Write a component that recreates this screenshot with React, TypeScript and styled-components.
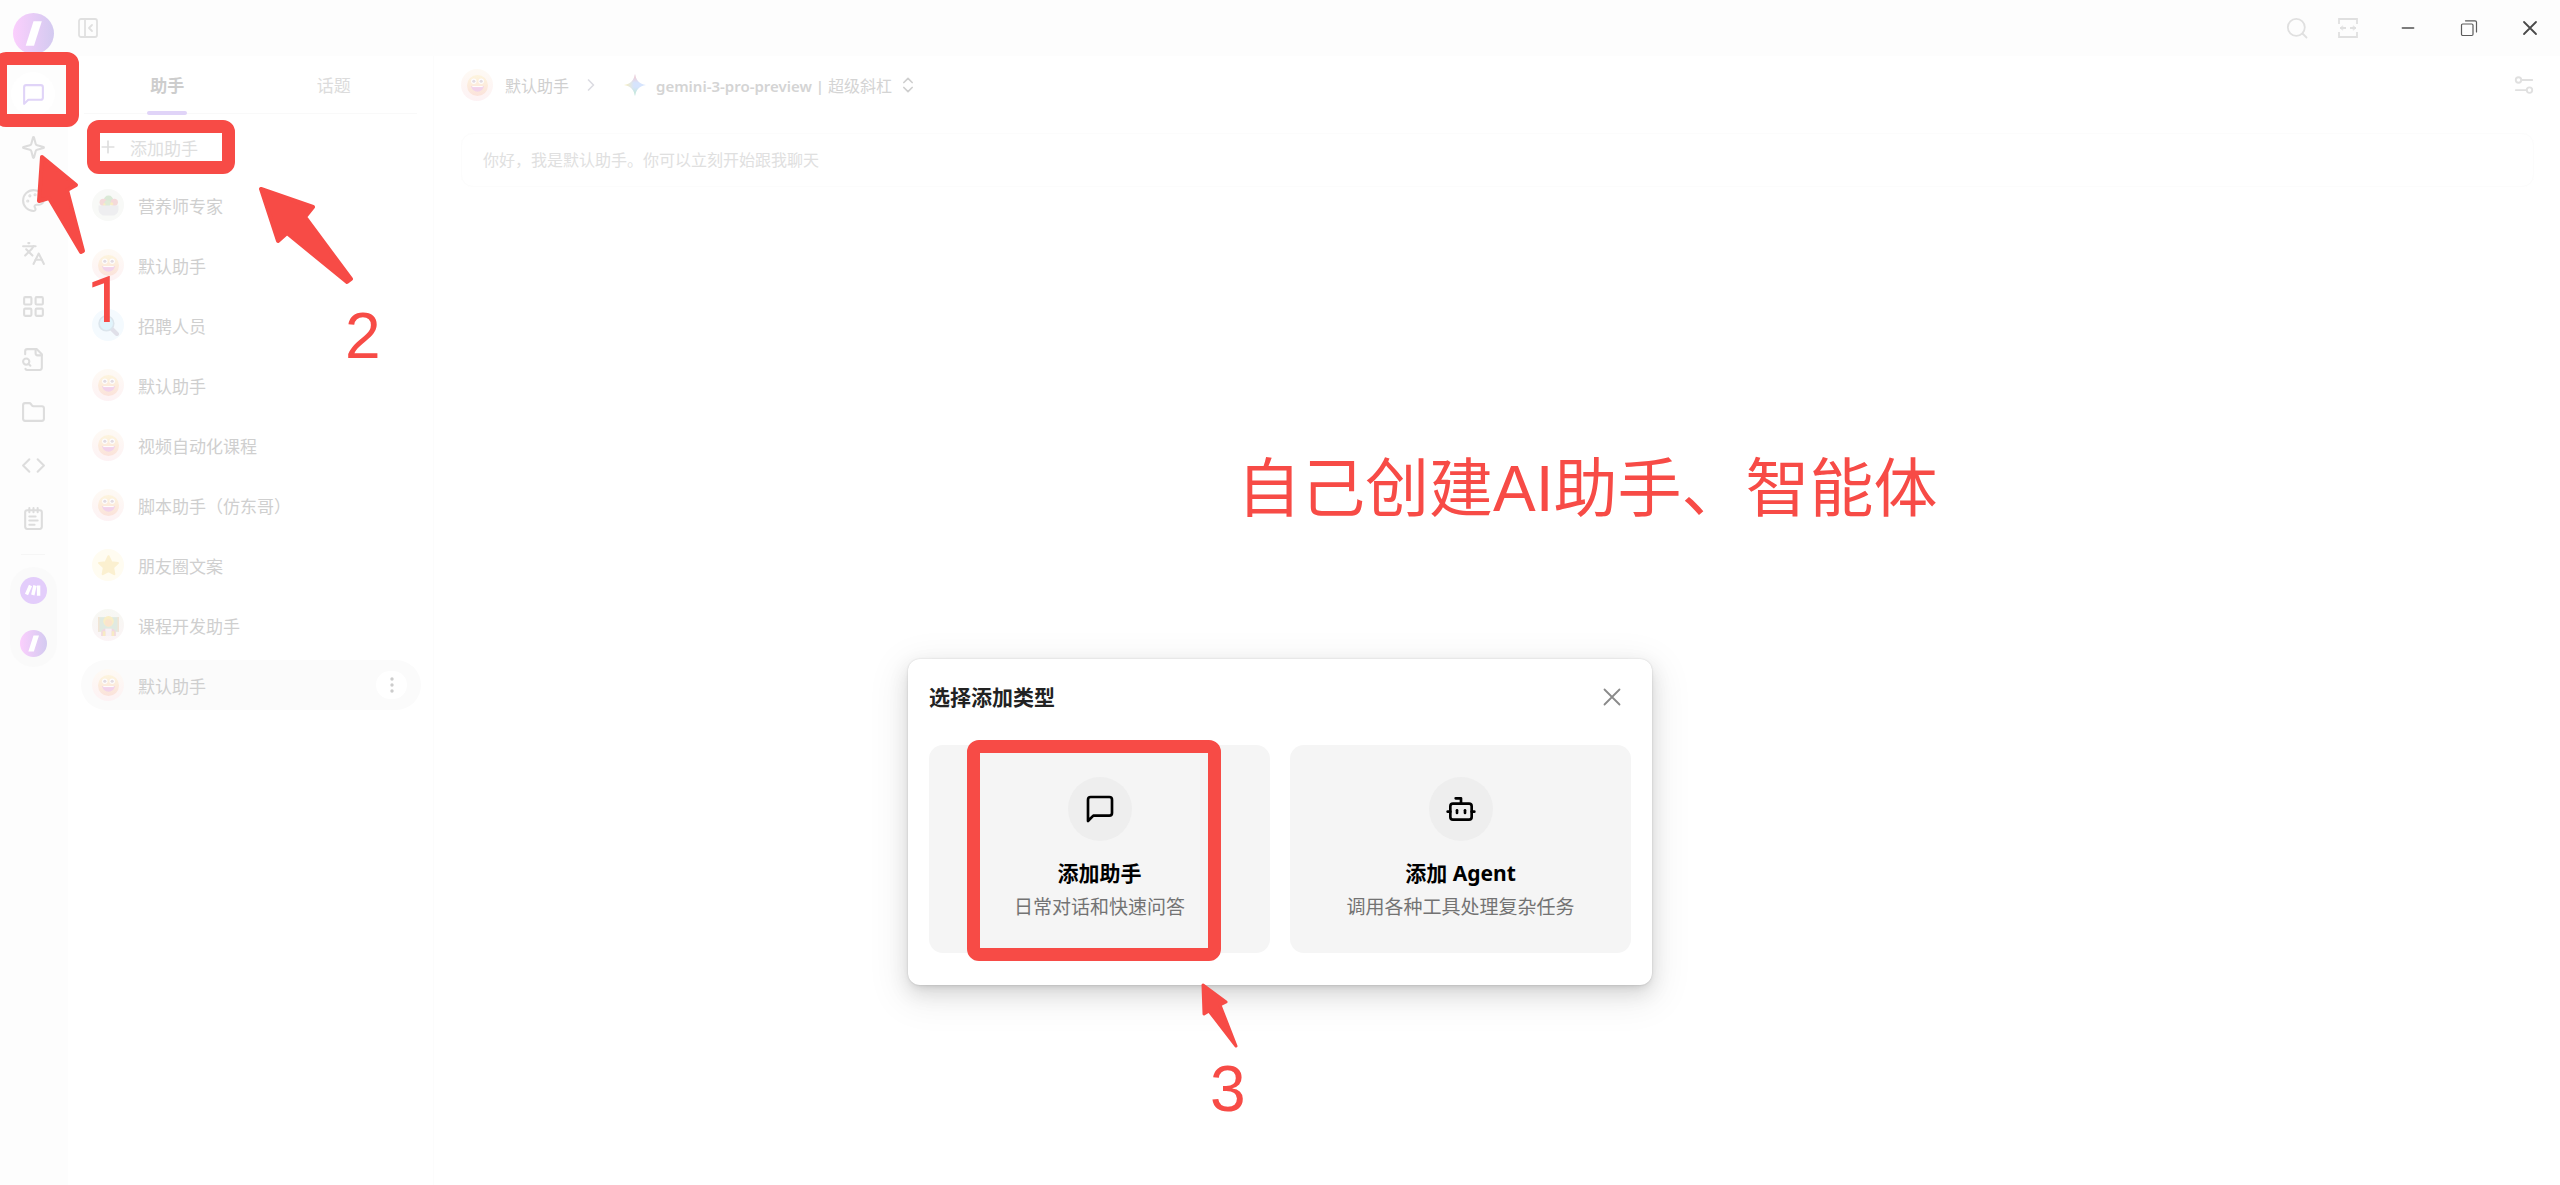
import React from 'react';
import styled, { createGlobalStyle, css } from 'styled-components';
import { Bot, Code, Folder, Languages, LayoutGrid, NotepadText, Palette, Plus } from 'lucide-react';

const RED = '#f74b46';

const GlobalStyle = createGlobalStyle`
  *, *::before, *::after { box-sizing: border-box; }
  body {
    margin: 0;
    background: #fdfdfd;
    font-family: "Noto Sans", "Noto Sans CJK SC", sans-serif;
    color: #cccccc;
  }
  button { font: inherit; color: inherit; border: 0; padding: 0; background: none; cursor: pointer; }
  h2, h3, p, ul { margin: 0; padding: 0; }
  ul { list-style: none; }
  svg { display: block; flex: none; }
`;

/* ---------- layout ---------- */

const Shell = styled.div`
  position: relative;
  display: grid;
  grid-template-columns: 68px minmax(0, 1fr);
  min-height: 100vh;
  overflow: hidden;
`;

const Rail = styled.aside`
  display: flex;
  flex-direction: column;
  align-items: center;
  padding: 13px 2px 0 0;
`;

const Avatar = styled.button`
  margin-bottom: 18px;
`;

const RailNav = styled.nav`
  display: flex;
  flex-direction: column;
  gap: 9px;
`;

const RailButton = styled.button<{ $active?: boolean }>`
  display: grid;
  place-items: center;
  width: 44px;
  height: 44px;
  border-radius: 50%;
  color: ${p => (p.$active ? '#e0d4f8' : '#dddddd')};
  background: ${p => (p.$active ? '#ffffff' : 'transparent')};
`;

const RailDivider = styled.hr`
  width: 24px;
  margin: 14px 0 12px;
  border: 0;
  border-top: 1px solid #f6f6f6;
`;

const PinnedApps = styled.div`
  display: flex;
  flex-direction: column;
  gap: 26px;
  padding: 10px;
  border-radius: 24px;
  background: #fafafa;
`;

const Body = styled.div`
  display: flex;
  flex-direction: column;
  min-width: 0;
`;

const TitleBar = styled.header`
  display: flex;
  align-items: center;
  justify-content: space-between;
  height: 56px;
  padding-left: 6px;
  color: #e0e0e0;
`;

const WindowTools = styled.div`
  display: flex;
  align-items: center;
`;

const ToolButton = styled.button<{ $width: number; $tone?: string }>`
  display: grid;
  place-items: center;
  width: ${p => p.$width}px;
  height: 40px;
  color: ${p => p.$tone ?? '#e0e0e0'};
`;

const Workspace = styled.main`
  flex: 1;
  display: grid;
  grid-template-columns: 366px minmax(0, 1fr);
  background: #ffffff;
`;

/* ---------- assistant list ---------- */

const ListPanel = styled.section`
  border-right: 1px solid #fcfcfc;
`;

const Tabs = styled.div`
  display: grid;
  grid-template-columns: 1fr 1fr;
  height: 58px;
  margin: 0 16px;
  border-bottom: 1px solid #f9f9f9;
`;

const Tab = styled.button<{ $active?: boolean }>`
  position: relative;
  font-size: 17px;
  font-weight: ${p => (p.$active ? 700 : 400)};
  color: ${p => (p.$active ? '#cdcdcd' : '#dcdcdc')};
  ${p =>
    p.$active &&
    css`
      &::after {
        content: '';
        position: absolute;
        left: 50%;
        bottom: -2px;
        width: 40px;
        height: 4px;
        margin-left: -20px;
        border-radius: 2px;
        background: #e0d4f8;
      }
    `}
`;

const AddButton = styled.button`
  display: flex;
  align-items: center;
  gap: 12px;
  height: 42px;
  margin: 12px 0 12px 30px;
  font-size: 17px;
  color: #dedede;
`;

const AssistantList = styled.ul`
  display: flex;
  flex-direction: column;
  gap: 10px;
  padding: 0 12px 0 13px;
`;

const AssistantRow = styled.li<{ $selected?: boolean }>`
  display: flex;
  align-items: center;
  height: 50px;
  padding: 0 14px 0 11px;
  border-radius: 25px;
  background: ${p => (p.$selected ? '#fbfbfb' : 'transparent')};
`;

const AssistantButton = styled.button`
  flex: 1;
  display: flex;
  align-items: center;
  gap: 14px;
  font-size: 17px;
  text-align: left;
  color: #cfcfcf;
`;

const MoreButton = styled.button`
  display: grid;
  place-items: center;
  width: 31px;
  height: 28px;
  border-radius: 14px;
  color: #cccccc;
  background: #ffffff;
`;

const EmojiDisc = styled.span<{ $tint: string }>`
  display: grid;
  place-items: center;
  width: 32px;
  height: 32px;
  border-radius: 50%;
  background: ${p => p.$tint};

  svg {
    opacity: 0.8;
  }
`;

/* ---------- chat ---------- */

const ChatPanel = styled.section`
  display: flex;
  flex-direction: column;
`;

const ChatHeader = styled.div`
  display: flex;
  align-items: center;
  justify-content: space-between;
  height: 58px;
  padding: 0 25px 0 27px;
`;

const Crumbs = styled.div`
  display: flex;
  align-items: center;
  font-size: 16px;
  color: #cfcfcf;
`;

const CrumbButton = styled.button<{ $gap: number }>`
  display: flex;
  align-items: center;
  gap: ${p => p.$gap}px;
`;

const CrumbArrow = styled.span`
  padding: 0 23px 0 12px;
  color: #dcdce2;
`;

const ModelName = styled.span`
  display: flex;
  align-items: baseline;
  gap: 4px;
  padding-left: 4px;
  color: #d4d4d4;
  white-space: nowrap;
`;

const ModelId = styled.strong`
  font-size: 15px;
  font-weight: 600;
`;

const Greeting = styled.p`
  margin: 19px 26px 0 27px;
  padding: 14px 21px;
  border: 1px solid #fcfcfc;
  border-radius: 12px;
  font-size: 16px;
  line-height: 24px;
  color: #e0e0e0;
`;

/* ---------- dialog ---------- */

const Overlay = styled.div`
  position: absolute;
  inset: 0;
  display: flex;
  align-items: flex-start;
  justify-content: center;
  padding-top: 659px;
`;

const Dialog = styled.section`
  width: 744px;
  padding: 16px 21px 32px;
  border-radius: 12px;
  background: #ffffff;
  box-shadow: 0 8px 20px rgba(0, 0, 0, 0.12), 0 4px 8px -4px rgba(0, 0, 0, 0.14), 0 10px 36px 10px rgba(0, 0, 0, 0.06),
    0 0 2px rgba(0, 0, 0, 0.16);
`;

const DialogHead = styled.header`
  display: flex;
  align-items: center;
  justify-content: space-between;
  height: 44px;
  margin-bottom: 26px;
`;

const DialogTitle = styled.h2`
  font-size: 21px;
  line-height: 32px;
  font-weight: 700;
  color: #222222;
`;

const CloseButton = styled.button`
  display: grid;
  place-items: center;
  width: 38px;
  height: 38px;
  color: #8a8a8a;
`;

const Choices = styled.div`
  display: grid;
  grid-template-columns: 1fr 1fr;
  gap: 20px;
`;

const Choice = styled.button`
  display: flex;
  flex-direction: column;
  align-items: center;
  padding: 32px 16px;
  border-radius: 14px;
  background: #f5f5f5;
`;

const ChoiceIcon = styled.span`
  display: grid;
  place-items: center;
  width: 64px;
  height: 64px;
  margin-bottom: 16px;
  border-radius: 50%;
  color: #000000;
  background: #eeeeee;
`;

const ChoiceTitle = styled.span`
  margin-bottom: 4px;
  font-size: 21px;
  line-height: 32px;
  font-weight: 700;
  color: #000000;
`;

const ChoiceText = styled.span`
  font-size: 19px;
  line-height: 28px;
  color: #737373;
`;

/* ---------- annotations drawn over the window ---------- */

const Markup = styled.div`
  position: absolute;
  inset: 0;
  pointer-events: none;
  font-family: "Liberation Sans", "Noto Sans CJK SC", sans-serif;
  font-size: 64px;
  line-height: 72px;
  color: ${RED};
`;

const Frame = styled.div<{ $x: number; $y: number; $w: number; $h: number }>`
  position: absolute;
  left: ${p => p.$x}px;
  top: ${p => p.$y}px;
  width: ${p => p.$w}px;
  height: ${p => p.$h}px;
  border: 13px solid ${RED};
  border-radius: 12px;
`;

const Note = styled.span<{ $x: number; $y: number; $face?: string }>`
  position: absolute;
  left: ${p => p.$x}px;
  top: ${p => p.$y}px;
  font-family: ${p => p.$face ?? 'inherit'};
  white-space: nowrap;
`;

const Arrows = styled.svg`
  position: absolute;
  left: 0;
  top: 0;
  fill: ${RED};
  stroke: ${RED};
  stroke-width: 4;
  stroke-linejoin: round;
`;

/* ---------- drawings ---------- */

const Line = ({ size = 24, width = 2, children }: { size?: number; width?: number; children: React.ReactNode }) => (
  <svg width={size} height={size} viewBox="0 0 24 24" fill="none" stroke="currentColor" strokeWidth={width}
    strokeLinecap="round" strokeLinejoin="round" aria-hidden="true">
    {children}
  </svg>
);

const ChatIcon = ({ size }: { size: number }) => (
  <Line size={size}>
    <path d="M21 15a2 2 0 0 1-2 2H7l-4 4V5a2 2 0 0 1 2-2h14a2 2 0 0 1 2 2z" />
  </Line>
);

const SparkleIcon = () => (
  <Line size={25}>
    <path d="M9.937 15.5A2 2 0 0 0 8.5 14.063l-6.135-1.582a.5.5 0 0 1 0-.962L8.5 9.936A2 2 0 0 0 9.937 8.5l1.582-6.135a.5.5 0 0 1 .963 0L14.063 8.5A2 2 0 0 0 15.5 9.937l6.135 1.581a.5.5 0 0 1 0 .964L15.5 14.063a2 2 0 0 0-1.437 1.437l-1.582 6.135a.5.5 0 0 1-.963 0z" />
  </Line>
);

const FileSearchIcon = () => (
  <Line size={25}>
    <path d="M14 2v4a2 2 0 0 0 2 2h4" />
    <path d="M4.268 21a2 2 0 0 0 1.727 1H18a2 2 0 0 0 2-2V7l-5-5H6a2 2 0 0 0-2 2v3" />
    <path d="m9 18-1.5-1.5" />
    <circle cx="5" cy="14" r="3" />
  </Line>
);

const SlashLogo = ({ size, id }: { size: number; id: string }) => (
  <svg width={size} height={size} viewBox="0 0 42 42" aria-hidden="true">
    <defs>
      <linearGradient id={id}>
        <stop offset="0" stopColor="#fbcffd" />
        <stop offset="1" stopColor="#d3caf0" />
      </linearGradient>
    </defs>
    <circle cx="21" cy="21" r="21" fill={`url(#${id})`} />
    <path d="M21 8.500h8.500l-8 25h-8.500z" fill="#ffffff" />
  </svg>
);

const MakeLogo = () => (
  <svg width="27" height="27" viewBox="0 0 27 27" aria-hidden="true">
    <circle cx="13.500" cy="13.500" r="13.500" fill="#e3cdfb" />
    <path d="M10.500 8.500 6.500 17.500M15 8.500 12.800 18M18.600 8.500v10.200" stroke="#ffffff" strokeWidth="3.400" fill="none" />
  </svg>
);

const Grin = () => (
  <svg width="21" height="21" viewBox="0 0 20 20" aria-hidden="true">
    <defs>
      <linearGradient id="grin-skin" x2="0" y2="1">
        <stop offset="0" stopColor="#fdf4d8" />
        <stop offset="1" stopColor="#fbdfd6" />
      </linearGradient>
    </defs>
    <circle cx="10" cy="10" r="10" fill="url(#grin-skin)" />
    <circle cx="6.500" cy="6" r="2.600" fill="#ffffff" />
    <circle cx="13.500" cy="6" r="2.600" fill="#ffffff" />
    <circle cx="6.500" cy="6" r="1.500" fill="#dcd5df" />
    <circle cx="13.500" cy="6" r="1.500" fill="#dcd5df" />
    <path d="M4 10.500h12a6 5.500 0 0 1-12 0z" fill="#f0cbe8" />
    <path d="M5 10.500h10v1H5z" fill="#ffffff" />
  </svg>
);

const Salad = () => (
  <svg width="21" height="21" viewBox="0 0 20 20" aria-hidden="true">
    <circle cx="10" cy="5" r="4.500" fill="#d3e6cf" />
    <circle cx="5" cy="7" r="3.500" fill="#f4d3d3" />
    <circle cx="15.500" cy="7" r="3.500" fill="#f4d3d3" />
    <circle cx="9" cy="8" r="3" fill="#d9e8d0" />
    <circle cx="13" cy="8.500" r="1.500" fill="#f8ebb8" />
    <circle cx="6" cy="9" r="1.200" fill="#f8ebb8" />
    <path d="M.5 10h19v3.500a6 6 0 0 1-6 6h-7a6 6 0 0 1-6-6z" fill="#ececef" />
  </svg>
);

const Magnifier = () => (
  <svg width="21" height="21" viewBox="0 0 20 20" aria-hidden="true">
    <path d="m13 13 5 5" stroke="#dcdae4" strokeWidth="4" strokeLinecap="round" />
    <circle cx="8" cy="8" r="7" fill="#dcf3fc" stroke="#d6e0e8" strokeWidth="1.500" />
  </svg>
);

const Star = () => (
  <svg width="21" height="21" viewBox="0 0 20 20" aria-hidden="true">
    <path d="M10 1.200l2.700 5.700 6.200.8-4.500 4.300 1.100 6.200L10 15.200l-5.500 3 1.100-6.200L1.100 7.700l6.200-.8z"
      fill="#fbeec8" stroke="#fbeec8" strokeWidth="2" strokeLinejoin="round" />
  </svg>
);

const Teacher = () => (
  <svg width="21" height="21" viewBox="0 0 20 20" aria-hidden="true">
    <path d="M0 2h20v14H0z" fill="#dbe8dd" />
    <path d="M0 2h1.500v14H0zM18.500 2H20v14h-1.500z" fill="#f0e2cf" />
    <path d="M3 20v-3a4 4 0 0 1 4-4h6a4 4 0 0 1 4 4v3z" fill="#f0d2dc" />
    <path d="M7 13h6v7H7z" fill="#f7f0f4" />
    <path d="M4.500 15.500H7V20H4.500zM13 15.500h2.500V20H13z" fill="#f8e9b8" />
    <circle cx="10" cy="6" r="5" fill="#faecbb" />
    <circle cx="10" cy="7.500" r="3.500" fill="#fbe0c4" />
  </svg>
);

const Gemini = () => (
  <svg width="22" height="22" viewBox="0 0 22 22" aria-hidden="true">
    <defs>
      <linearGradient id="gem-a" x1="0" x2="1"><stop offset="0" stopColor="#fbeeb4" /><stop offset=".45" stopColor="#d6e4fd" /></linearGradient>
      <linearGradient id="gem-b" x2="0" y2="1"><stop offset="0" stopColor="#fbc4c4" /><stop offset=".4" stopColor="#fbc4c4" stopOpacity="0" /></linearGradient>
      <linearGradient id="gem-c" x2="0" y2="1"><stop offset=".6" stopColor="#bdeac8" stopOpacity="0" /><stop offset="1" stopColor="#bdeac8" /></linearGradient>
    </defs>
    {['gem-a', 'gem-b', 'gem-c'].map(id => (
      <path key={id} d="M11 0c1 6.500 4.500 10 11 11-6.500 1-10 4.500-11 11C10 15.500 6.500 12 0 11 6.500 10 10 6.500 11 0z" fill={`url(#${id})`} />
    ))}
  </svg>
);

/* ---------- data ---------- */

const GRIN_TINT = 'linear-gradient(#fefaf4, #fdf2f4)';

const assistants = [
  { name: '营养师专家', icon: <Salad />, tint: '#f8f9f7' },
  { name: '默认助手', icon: <Grin />, tint: GRIN_TINT },
  { name: '招聘人员', icon: <Magnifier />, tint: '#f4fafe' },
  { name: '默认助手', icon: <Grin />, tint: GRIN_TINT },
  { name: '视频自动化课程', icon: <Grin />, tint: GRIN_TINT },
  { name: '脚本助手（仿东哥）', icon: <Grin />, tint: GRIN_TINT },
  { name: '朋友圈文案', icon: <Star />, tint: '#fffcf1' },
  { name: '课程开发助手', icon: <Teacher />, tint: 'linear-gradient(#f7f8f3, #fbf4f6)' },
  { name: '默认助手', icon: <Grin />, tint: GRIN_TINT, selected: true },
];

const railItems = [
  { label: '助手', icon: <ChatIcon size={25} />, active: true },
  { label: '智能体', icon: <SparkleIcon /> },
  { label: '绘画', icon: <Palette size={25} /> },
  { label: '翻译', icon: <Languages size={25} /> },
  { label: '小程序', icon: <LayoutGrid size={25} /> },
  { label: '知识库', icon: <FileSearchIcon /> },
  { label: '文件', icon: <Folder size={25} /> },
  { label: '代码', icon: <Code size={25} /> },
  { label: '笔记', icon: <NotepadText size={25} /> },
];

export default function App() {
  return (
    <>
      <GlobalStyle />
      <Shell>
        <Rail>
          <Avatar aria-label="用户"><SlashLogo size={41} id="logo-large" /></Avatar>
          <RailNav>
            {railItems.map(item => (
              <RailButton key={item.label} aria-label={item.label} $active={item.active}>{item.icon}</RailButton>
            ))}
          </RailNav>
          <RailDivider />
          <PinnedApps>
            <button aria-label="Make"><MakeLogo /></button>
            <button aria-label="超级斜杠"><SlashLogo size={27} id="logo-small" /></button>
          </PinnedApps>
        </Rail>

        <Body>
          <TitleBar>
            <ToolButton $width={28} aria-label="收起侧栏">
              <Line size={24} width={1.8}>
                <rect x="3" y="3" width="18" height="18" rx="2" />
                <path d="M9 3v18M16 15l-3-3 3-3" />
              </Line>
            </ToolButton>
            <WindowTools>
              <ToolButton $width={44} aria-label="搜索">
                <Line size={24} width={1.8}><circle cx="11.300" cy="11.300" r="8.500" /><path d="m17.500 17.500 4 4" /></Line>
              </ToolButton>
              <ToolButton $width={58} aria-label="宽屏">
                <Line size={24} width={1.8}>
                  <path d="M3 8V3h18v5M3 16v5h18v-5" strokeLinecap="butt" strokeLinejoin="miter" />
                  <path d="M4 12h6M20 12h-6" strokeLinecap="butt" />
                  <path d="m6.500 10-2.500 2 2.500 2zM17.500 10l2.500 2-2.500 2z" fill="currentColor" strokeWidth="0.600" />
                </Line>
              </ToolButton>
              <ToolButton $width={61} $tone="#7c7c7c" aria-label="最小化">
                <Line size={24} width={1.8}><path d="M6.500 12h11" /></Line>
              </ToolButton>
              <ToolButton $width={61} $tone="#5c5c5c" aria-label="还原">
                <Line size={24} width={1.2}><rect x="4.500" y="8" width="11.500" height="11.500" rx="1.200" /><path d="M8.500 4.800h9.500a1.500 1.500 0 0 1 1.500 1.500V16" /></Line>
              </ToolButton>
              <ToolButton $width={61} $tone="#4a4a4a" aria-label="关闭窗口">
                <Line size={24} width={1.8}><path d="m6 6 12 12M18 6 6 18" /></Line>
              </ToolButton>
            </WindowTools>
          </TitleBar>

          <Workspace>
            <ListPanel>
              <Tabs role="tablist">
                <Tab role="tab" aria-selected="true" $active>助手</Tab>
                <Tab role="tab" aria-selected="false">话题</Tab>
              </Tabs>
              <AddButton><Plus size={20} />添加助手</AddButton>
              <AssistantList>
                {assistants.map((a, i) => (
                  <AssistantRow key={i} $selected={a.selected}>
                    <AssistantButton><EmojiDisc $tint={a.tint}>{a.icon}</EmojiDisc>{a.name}</AssistantButton>
                    {a.selected && (
                      <MoreButton aria-label="更多">
                        <svg width="4" height="16" viewBox="0 0 4 16" fill="currentColor" aria-hidden="true">
                          <circle cx="2" cy="2" r="1.700" /><circle cx="2" cy="8" r="1.700" /><circle cx="2" cy="14" r="1.700" />
                        </svg>
                      </MoreButton>
                    )}
                  </AssistantRow>
                ))}
              </AssistantList>
            </ListPanel>

            <ChatPanel>
              <ChatHeader>
                <Crumbs>
                  <CrumbButton $gap={12}><EmojiDisc $tint={GRIN_TINT}><Grin /></EmojiDisc>默认助手</CrumbButton>
                  <CrumbArrow><Line size={20}><path d="m9 18 6-6-6-6" /></Line></CrumbArrow>
                  <CrumbButton $gap={6}>
                    <Gemini />
                    <ModelName><ModelId>gemini-3-pro-preview |</ModelId> 超级斜杠</ModelName>
                    <Line size={20}><path d="m7 15 5 5 5-5M7 9l5-5 5 5" /></Line>
                  </CrumbButton>
                </Crumbs>
                <ToolButton $width={22} aria-label="设置">
                  <Line size={22}><path d="M9 6.500h12M3 17.500h12" /><circle cx="6" cy="6.500" r="3" /><circle cx="18" cy="17.500" r="3" /></Line>
                </ToolButton>
              </ChatHeader>
              <Greeting>你好，我是默认助手。你可以立刻开始跟我聊天</Greeting>
            </ChatPanel>
          </Workspace>
        </Body>

        <Overlay>
          <Dialog role="dialog" aria-labelledby="dialog-title">
            <DialogHead>
              <DialogTitle id="dialog-title">选择添加类型</DialogTitle>
              <CloseButton aria-label="关闭">
                <Line size={24} width={1.8}><path d="m4.500 4.500 15 15M19.500 4.500l-15 15" /></Line>
              </CloseButton>
            </DialogHead>
            <Choices>
              <Choice>
                <ChoiceIcon><ChatIcon size={32} /></ChoiceIcon>
                <ChoiceTitle>添加助手</ChoiceTitle>
                <ChoiceText>日常对话和快速问答</ChoiceText>
              </Choice>
              <Choice>
                <ChoiceIcon><Bot size={32} /></ChoiceIcon>
                <ChoiceTitle>添加 Agent</ChoiceTitle>
                <ChoiceText>调用各种工具处理复杂任务</ChoiceText>
              </Choice>
            </Choices>
          </Dialog>
        </Overlay>

        <Markup>
          <Frame $x={-6} $y={52} $w={85} $h={75} />
          <Frame $x={87} $y={120} $w={148} $h={54} />
          <Frame $x={967} $y={740} $w={254} $h={221} />
          <Arrows width="1300" height="1100" aria-hidden="true">
            <path d="M42 157 76 185 67 190 83 251 81 252 49 198 39 201z" />
            <path d="M261 189 313 207 305 217 351 279 347 282 287 233 278 241z" />
            <path d="M1203 985 1226 1002 1220 1005 1236 1046 1209 1011 1204 1014z" strokeWidth="3" />
          </Arrows>
          <Note $x={87} $y={265} $face="Roboto, sans-serif">1</Note>
          <Note $x={345} $y={300}>2</Note>
          <Note $x={1210} $y={1053}>3</Note>
          <Note $x={1237} $y={453}>自己创建AI助手、智能体</Note>
        </Markup>
      </Shell>
    </>
  );
}
